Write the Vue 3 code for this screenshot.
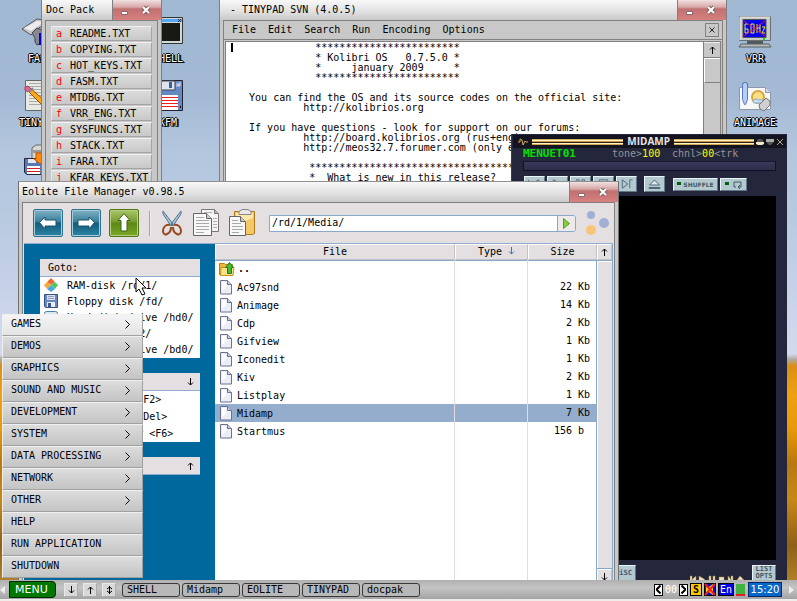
<script setup>
import { ref } from 'vue'

const path = ref('/rd/1/Media/')
const selected = ref('Midamp')

const docs = [
  ['a', 'README.TXT'], ['b', 'COPYING.TXT'], ['c', 'HOT_KEYS.TXT'], ['d', 'FASM.TXT'],
  ['e', 'MTDBG.TXT'], ['f', 'VRR_ENG.TXT'], ['g', 'SYSFUNCS.TXT'], ['h', 'STACK.TXT'],
  ['i', 'FARA.TXT'], ['j', 'KFAR_KEYS.TXT'],
]

const padMenu = ['File', 'Edit', 'Search', 'Run', 'Encoding', 'Options']
const stars = (n) => '*'.repeat(n)
const at = (col, text) => ' '.repeat(col) + text
const padText = [
  at(14, stars(24)),
  at(14, '* Kolibri OS   0.7.5.0 *'),
  at(14, '*     january 2009     *'),
  at(14, stars(24)),
  '',
  at(3, 'You can find the OS and its source codes on the official site:'),
  at(12, 'http://kolibrios.org'),
  '',
  at(3, 'If you have questions - look for support on our forums:'),
  at(12, 'http://board.kolibrios.org (rus+eng)'),
  at(12, 'http://meos32.7.forumer.com (only eng)'),
  '',
  at(13, stars(36)),
  at(13, '*  What is new in this release?'),
].join('\n')

const files = [
  ['Ac97snd', '22 Kb'], ['Animage', '14 Kb'], ['Cdp', '2 Kb'], ['Gifview', '1 Kb'],
  ['Iconedit', '1 Kb'], ['Kiv', '2 Kb'], ['Listplay', '1 Kb'], ['Midamp', '7 Kb'],
  ['Startmus', '156 b '],
]

const places = [
  ['ram', 'RAM-disk /rd/1/'], ['floppy', 'Floppy disk /fd/'], ['disk', 'Hard disk drive /hd0/'],
  ['disk', 'CD drive /cd2/'], ['disk', 'Hard disk drive /bd0/'],
]
const actions = ['Rename file <F2>', 'Delete file <Del>', 'Create folder <F6>']

const menu = [
  ['GAMES', true], ['DEMOS', true], ['GRAPHICS', true], ['SOUND AND MUSIC', true],
  ['DEVELOPMENT', true], ['SYSTEM', true], ['DATA PROCESSING', true], ['NETWORK', true],
  ['OTHER', true], ['HELP', false], ['RUN APPLICATION', false], ['SHUTDOWN', false],
]
const tasks = ['SHELL', 'Midamp', 'EOLITE', 'TINYPAD', 'docpak']
const transport = [
  'M4 4v9M15 4v9L7 8.500z', 'M6 4v9l9-4.500z', 'M6 4h3v9H6zM12 4h3v9h-3z', 'M6 4h9v9H6z', 'M6 4v9l6-4.500zM14 13V4h3',
]
</script>

<template>
  <div class="screen">
    <main class="desktop">
      <div class="icons first">
        <a href="#" class="shortcut">
          <svg width="32" height="32" viewBox="0 0 32 32">
            <path d="M-2 13 13 3l15 2 2 5-8 2-6-1-9 8z" fill="#c8c8cc" stroke="#555" />
            <path d="M0 12 13 5l7 1-13 9z" fill="#ececf0" />
            <path d="m13 12 5 2v13l-5 2-2-3v-4l-3-5z" fill="#888890" stroke="#444" />
            <path d="M15 17h15v12H15z" fill="#0000e0" />
          </svg>
          <span>FASM</span>
        </a>
        <a href="#" class="shortcut">
          <svg width="32" height="32" viewBox="0 0 32 32">
            <path d="M1.500.5h28v30h-28z" fill="#e8e8e4" stroke="#666" />
            <path d="M5 3.500h22M5 6.500h22M5 9.500h22M5 12.500h22M5 15.500h22M5 18.500h22M5 21.500h22M5 24.500h22" stroke="#aaa" />
            <path d="m2 9 3-2 23 20-1 4-4-1z" fill="#f8a818" stroke="#985000" />
            <path d="m1 7 3-1 3 3-3 3-3-2z" fill="#e86090" stroke="#a04060" />
            <path d="m5 12 4-4" stroke="#888" stroke-width="2" />
          </svg>
          <span>TINYPAD</span>
        </a>
        <a href="#" class="shortcut">
          <svg width="32" height="32" viewBox="0 0 32 32">
            <path d="m8 4 4-3h16v14H8z" fill="#d8d8d8" stroke="#666" />
            <path d="M9 6h18v3H9z" fill="#999" />
            <path d="M.5 14.500h20v16H3l-2.500-2z" fill="#5878b8" stroke="#222840" />
            <path d="M4 15h8v4H4z" fill="#e8e8e8" />
            <path d="M3 22h13v8H3z" fill="#fff" />
            <path d="M3 24.500h13M3 27.500h13" stroke="#d02020" />
            <path d="M12 9h6v6h3l-5 5-6-5h2z" fill="#ff8a10" stroke="#c05000" />
          </svg>
        </a>
      </div>
      <div class="icons second">
        <a href="#" class="shortcut">
          <svg width="32" height="32" viewBox="0 0 32 32">
            <path d="M.5 1.500h30v26H.5z" fill="#d0d8d8" stroke="#333" />
            <path d="M2 3h28v3H2z" fill="#58a8f0" />
            <path d="m26 3 3 3m0-3-3 3" stroke="#103050" />
            <path d="M3 7h25v18H3z" fill="#181814" />
          </svg>
          <span>SHELL</span>
        </a>
        <a href="#" class="shortcut">
          <svg width="32" height="32" viewBox="0 0 32 32">
            <path d="M.5.5h30v30H3l-2.500-2z" fill="#6488c0" stroke="#223" />
            <path d="M7 1h16v9H7z" fill="#e0e4ec" stroke="#445" />
            <path d="M17 2h3v6h-3z" fill="#3860a8" />
            <path d="M25 3v4m2-4v4m0-4h2m-4 2h4" stroke="#dde" />
            <path d="M3 15h23v15H3z" fill="#fff" />
            <path d="M3 17.500h23M3 20.500h23M3 23.500h23M3 26.500h23" stroke="#f02020" />
            <path d="M28 26h1v2h-1z" fill="#111" />
          </svg>
          <span>KFM</span>
        </a>
      </div>
      <div class="icons third">
        <a href="#" class="shortcut">
          <svg width="32" height="32" viewBox="0 0 32 32">
            <path d="M.5.5h31v24H.5z" fill="#c8ccc4" stroke="#687078" />
            <path d="M1 1h30M1 1v23" stroke="#f0f0e8" />
            <path d="M4 3.500h23v18H4z" fill="#0000f0" stroke="#556" />
            <path d="M9 8H6v9h3v-4H6M12 8h3v9h-3zM18 8v9m3-9v9m-3-5h3m2-1h3l-3 6h3" fill="none" stroke="#f0e830" />
            <path d="m5 5 21 15M26 5 5 20" stroke="#e81830" />
            <path d="M24 22h2v2h-2z" fill="#20d020" />
            <path d="M8 25h16v3H8z" fill="#505858" />
            <path d="M2 28h28l2 3H0z" fill="#b8bcb8" stroke="#586068" />
          </svg>
          <span>VRR</span>
        </a>
        <a href="#" class="shortcut">
          <svg width="32" height="32" viewBox="0 0 32 32">
            <path d="M.5 7.500h26l5 5v17H.5z" fill="#f8f8f8" stroke="#9098b0" />
            <path d="M26.500 7.500v5h5" fill="#d8dce8" stroke="#9098b0" />
            <circle cx="19" cy="17" r="6" fill="#f8e080" stroke="#d8a840" stroke-width="2" />
            <path d="M14 22c0-3 4-4 5-2 3-1 6 0 6 3h-10z" fill="#c8dcf8" stroke="#88a8d8" />
            <path d="M3.500 3.500h1v-1h3v1h1v16l-2 5h-1l-2-5z" fill="#b8ccf8" stroke="#5878c8" />
            <path d="m20 25 7-7 4 3v4l-6 6-4-2z" fill="#d0d0d0" stroke="#777" />
          </svg>
          <span>ANIMAGE</span>
        </a>
      </div>

      <section class="window docpack">
        <header class="titlebar">
          <h2>Doc Pack</h2>
          <div class="controls">
            <button aria-label="Minimize"><svg width="8" height="6" viewBox="0 0 8 6"><path d="M.5 1.500h6v3h-6z" fill="#fff" stroke="#8a6a6a" /></svg></button>
            <button aria-label="Close"><svg width="10" height="10" viewBox="0 0 10 10"><path d="m2 2 6 6m0-6L2 8" stroke="#806060" stroke-width="4" /><path d="m2 2 6 6m0-6L2 8" stroke="#fff" stroke-width="2" /></svg></button>
          </div>
        </header>
        <div class="body">
          <ul>
            <li v-for="[key, name] in docs" :key="key"><button><b>{{ key }}</b>{{ name }}</button></li>
          </ul>
        </div>
      </section>

      <section class="window tinypad">
        <header class="titlebar">
          <h2>- TINYPAD SVN (4.0.5)</h2>
          <div class="controls">
            <button aria-label="Minimize"><svg width="8" height="6" viewBox="0 0 8 6"><path d="M.5 1.500h6v3h-6z" fill="#fff" stroke="#8a6a6a" /></svg></button>
            <button aria-label="Close"><svg width="10" height="10" viewBox="0 0 10 10"><path d="m2 2 6 6m0-6L2 8" stroke="#806060" stroke-width="4" /><path d="m2 2 6 6m0-6L2 8" stroke="#fff" stroke-width="2" /></svg></button>
          </div>
        </header>
        <div class="body">
          <nav>
            <button v-for="m in padMenu" :key="m">{{ m }}</button>
            <button class="tab-close" aria-label="Close document"><svg width="6" height="6" viewBox="0 0 6 6"><path d="m.5.5 5 5m0-5-5 5" stroke="#222" /></svg></button>
          </nav>
          <div class="editor">
            <pre><i class="caret"></i>{{ padText }}</pre>
            <div class="scroll">
              <button aria-label="Scroll up"><svg width="7" height="8" viewBox="0 0 7 8"><path d="M3.500 8V1M1 3.500 3.500 1 6 3.500" fill="none" stroke="#000" /></svg></button>
              <div class="thumb"></div>
            </div>
          </div>
        </div>
      </section>

      <section class="midamp">
        <header>
          <svg width="11" height="9" viewBox="0 0 11 9"><path d="M1 5h2V2l2 1 1 5 2-4 1 1h2" fill="none" stroke="#d8a860" /></svg>
          <i class="rule wide"></i>
          <h2>MIDAMP</h2>
          <i class="rule"></i>
          <button aria-label="Minimize"><svg width="8" height="8" viewBox="0 0 8 8"><path d="M1 4V2l2-1h2l2 1v2z" fill="#555" /><path d="M0 4h8v2L6 7H2L0 6z" fill="#f0e8c8" /></svg></button>
          <button aria-label="Shade"><svg width="8" height="8" viewBox="0 0 8 8"><path d="M0 1h8v3H0z" fill="#aaa" /><path d="M1 4h6v1L5 7H3L1 5z" fill="#555" /></svg></button>
          <button aria-label="Close"><svg width="8" height="8" viewBox="0 0 8 8"><path d="m1 1 6 6m0-6L1 7" stroke="#b8a888" /></svg></button>
        </header>
        <div class="status">
          <b>MENUET01</b>
          <span>tone&gt;<em>100</em></span>
          <span>chnl&gt;<em>00</em>&lt;trk</span>
        </div>
        <div class="seek"></div>
        <div class="deck">
          <button v-for="(d, n) in transport" :key="n" class="key" :aria-label="'Transport ' + (n + 1)">
            <svg width="19" height="14" viewBox="1 1 19 15"><path :d="d" fill="none" stroke="#506878" /></svg>
          </button>
          <button class="key eject" aria-label="Eject"><svg width="19" height="14" viewBox="1 1 19 14"><path d="m10.500 4 5 5h-10zM5 11.500h11v1H5z" fill="#dce8ec" stroke="#506878" /></svg></button>
          <button class="key shuffle"><i class="led"></i>SHUFFLE</button>
          <button class="key repeat" aria-label="Repeat"><i class="led"></i><svg width="11" height="8" viewBox="0 0 11 8"><path d="M4 6H2V1h7v5H6m2-2L6 6l2 2" fill="none" stroke="#405868" /></svg></button>
        </div>
        <div class="playlist"></div>
        <footer>
          <button class="key misc">MiSC</button>
          <svg width="54" height="9" viewBox="0 0 54 9" fill="#f0e4c0" stroke="#a08040" stroke-width=".5">
            <path d="M0 1h2v7H0zM6 1v7L2 4.500zM9 1v7l6-3.500zM19 1h2v7h-2zM23 1h2v7h-2zM29 2h5v6h-5zM38 1v7l3-3.500zM41 1h2v7h-2zM47 5l3-4 4 4zM47 7h7v2h-7z" />
          </svg>
          <button class="key list">LIST OPTS</button>
        </footer>
      </section>

      <section class="window eolite">
        <header class="titlebar">
          <h2>Eolite File Manager v0.98.5</h2>
          <div class="controls">
            <button aria-label="Minimize"><svg width="8" height="6" viewBox="0 0 8 6"><path d="M.5 1.500h6v3h-6z" fill="#fff" stroke="#8a6a6a" /></svg></button>
            <button aria-label="Close"><svg width="10" height="10" viewBox="0 0 10 10"><path d="m2 2 6 6m0-6L2 8" stroke="#806060" stroke-width="4" /><path d="m2 2 6 6m0-6L2 8" stroke="#fff" stroke-width="2" /></svg></button>
          </div>
        </header>
        <div class="body">
          <div class="toolbar">
            <div class="nav">
              <button class="go-nav" aria-label="Back"><svg width="26" height="24" viewBox="0 0 26 24"><path d="M4.500 11.500 10 6v3h11v6H10v3z" fill="#fff" stroke="#1c5068" /></svg></button>
              <button class="go-nav" aria-label="Forward"><svg width="26" height="24" viewBox="0 0 26 24"><path d="M21.500 11.500 16 6v3H5v6h11v3z" fill="#fff" stroke="#1c5068" /></svg></button>
              <button class="go-nav up" aria-label="Up"><svg width="26" height="24" viewBox="0 0 26 24"><path d="m13 2.500 6 7h-3v10.500h-6V9.500H7z" fill="#fff" stroke="#3c6410" /></svg></button>
            </div>
            <i class="divider"></i>
            <button aria-label="Cut">
              <svg width="22" height="28" viewBox="0 0 22 28">
                <path d="M2 2v3l8 12 2-2zM20 2v3l-8 12-2-2z" fill="#a8c4d8" stroke="#4f7890" />
                <path d="M9 16c-4-1-7 2-7 6 0 3 2 4 4 3 3-1 4-4 4-7m3-2c4-1 7 2 7 6 0 3-2 4-4 3-3-1-4-4-4-7" fill="none" stroke="#94481c" stroke-width="2" />
              </svg>
            </button>
            <button aria-label="Copy">
              <svg width="26" height="28" viewBox="0 0 26 28">
                <path d="M8.500.5h13l4 4v18h-17z" fill="#f4f4f4" stroke="#777" />
                <path d="M21.500.5v4h4" fill="#bbb" stroke="#777" />
                <path d="M20 9.500h4M20 12.500h4M20 15.500h4M20 18.500h4M11 3.500h8" stroke="#b0b0b0" />
                <path d="M.5 4.500h13l5 5v17H.5z" fill="#f8f8f8" stroke="#666" />
                <path d="M13.500 4.500v5h5" fill="#ccc" stroke="#666" />
                <path d="M3 8.500h8M3 11.500h13M3 14.500h13M3 17.500h13M3 20.500h13M3 23.500h8" stroke="#a8a8a8" />
              </svg>
            </button>
            <button aria-label="Paste">
              <svg width="26" height="28" viewBox="0 0 26 28">
                <path d="M5.500 2.500h20v22l-2 1h-18z" fill="#f4c868" stroke="#b07818" />
                <path d="M7 4h17v5L7 16z" fill="#fce8a8" />
                <path d="M10 2.500 13 .5h6l3 2v3H10z" fill="#e8e8e8" stroke="#888" />
                <path d="M.5 7.500h11l5 5v14H.5z" fill="#f8f8f8" stroke="#666" />
                <path d="M11.500 7.500v5h5" fill="#ccc" stroke="#666" />
                <path d="M3 11.500h6M3 14.500h9M3 17.500h11M3 20.500h11M3 23.500h7" stroke="#a8a8a8" />
              </svg>
            </button>
            <form @submit.prevent>
              <input v-model="path" type="text" aria-label="Path" />
              <button aria-label="Go"><svg width="7" height="11" viewBox="0 0 7 11"><path d="M.5.5v10l6-5z" fill="#84cc40" stroke="#58a018" /></svg></button>
            </form>
            <svg width="23" height="26" viewBox="0 0 23 26">
              <circle cx="5" cy="5" r="4" fill="#a0b0d4" /><circle cx="18" cy="13" r="5" fill="#a0b0d4" /><circle cx="5" cy="20" r="5" fill="#fcc478" />
            </svg>
          </div>
          <div class="content">
            <aside>
              <section>
                <h3>Goto:</h3>
                <ul class="places">
                  <li v-for="[icon, label] in places" :key="label">
                    <svg v-if="icon === 'ram'" width="14" height="14" viewBox="0 0 14 14">
                      <path d="m7 0 4 4-4 3-4-3z" fill="#f06838" /><path d="m3 4 4 3-4 4-3-4z" fill="#f8a838" />
                      <path d="m11 4 3 3-3 4-4-4z" fill="#50c860" /><path d="m7 7 4 4-4 3-4-3z" fill="#48a8e0" />
                    </svg>
                    <svg v-else-if="icon === 'floppy'" width="14" height="14" viewBox="0 0 14 14">
                      <path d="M.5.5h13v13h-12l-1-1z" fill="#6888c0" stroke="#385088" />
                      <path d="M3 1h8v5H3z" fill="#d8e0f0" /><path d="M4 2.500h6M4 4.500h6" stroke="#90a0c0" />
                      <path d="M3 8h8v5H3z" fill="#e8ecf4" /><path d="M4 9h3v4H4z" fill="#405890" />
                    </svg>
                    <svg v-else width="14" height="14" viewBox="0 0 14 14"><rect x=".5" y="1.500" width="13" height="11" rx="2" fill="#dce8f0" stroke="#4880a8" /></svg>
                    <span>{{ label }}</span>
                  </li>
                </ul>
              </section>
              <section>
                <h3><svg width="7" height="8" viewBox="0 0 7 8"><path d="M3.500 0v7M1 4.500 3.500 7 6 4.500" fill="none" stroke="#000" /></svg></h3>
                <ul class="actions"><li v-for="a in actions" :key="a">{{ a }}</li></ul>
              </section>
              <section>
                <h3><svg width="7" height="8" viewBox="0 0 7 8"><path d="M3.500 8V1M1 3.500 3.500 1 6 3.500" fill="none" stroke="#000" /></svg></h3>
              </section>
            </aside>
            <div class="listing">
              <table>
                <thead>
                  <tr>
                    <th class="file">File</th>
                    <th class="type">Type <svg width="7" height="8" viewBox="0 0 7 8"><path d="M3.500 0v7M1 4.500 3.500 7 6 4.500" fill="none" stroke="#3870c0" /></svg></th>
                    <th class="size">Size</th>
                  </tr>
                </thead>
                <tbody>
                  <tr>
                    <td>
                      <svg class="folder" width="16" height="14" viewBox="0 0 16 14">
                        <path d="M.5 1.500h5l1 1h7v10H.5z" fill="#f0b838" stroke="#b88010" />
                        <path d="M2 5.500h13l-1 8H1.500z" fill="#fce088" stroke="#c89018" />
                        <path d="m10.500.5 4 5h-2v6h-4v-6h-2z" fill="#48b838" stroke="#208020" />
                      </svg><b>..</b>
                    </td>
                    <td></td>
                    <td></td>
                  </tr>
                  <tr v-for="[name, size] in files" :key="name" :class="{ on: name === selected }" @click="selected = name">
                    <td>
                      <svg class="page" width="13" height="15" viewBox="0 0 13 15">
                        <path d="M.5.5h7l4 4v9.500H.5z" fill="#eceef6" stroke="#6c7094" />
                        <path d="M2 2h4v5L2 11z" fill="#fff" /><path d="M7.500.5v4h4" fill="#c8cce0" stroke="#6c7094" />
                      </svg>{{ name }}
                    </td>
                    <td></td>
                    <td class="num">{{ size }}</td>
                  </tr>
                  <tr class="rest"><td></td><td></td><td></td></tr>
                </tbody>
              </table>
              <div class="scroll">
                <button aria-label="Scroll up"><svg width="7" height="8" viewBox="0 0 7 8"><path d="M3.500 8V1M1 3.500 3.500 1 6 3.500" fill="none" stroke="#000" /></svg></button>
                <div class="thumb"></div>
                <button aria-label="Scroll down"><svg width="7" height="8" viewBox="0 0 7 8"><path d="M3.500 0v7M1 4.500 3.500 7 6 4.500" fill="none" stroke="#000" /></svg></button>
              </div>
            </div>
          </div>
        </div>
      </section>

      <nav class="start-menu">
        <button v-for="[label, sub] in menu" :key="label">
          {{ label }}
          <svg v-if="sub" width="5" height="9" viewBox="0 0 5 9"><path d="m.5.5 4 4-4 4" fill="none" stroke="#000" /></svg>
        </button>
      </nav>

      <svg class="pointer" width="13" height="20" viewBox="0 0 13 20">
        <path d="M1 1v14l3-3 3 6 3-1-3-6h4z" fill="#fff" stroke="#000" />
      </svg>
    </main>

    <footer class="taskbar">
      <svg class="edge" width="5" height="8" viewBox="0 0 5 8"><path d="M5 0v8L0 4z" fill="#eee" /></svg>
      <button class="start">MENU</button>
      <div class="arrows">
        <button aria-label="Down"><svg width="7" height="8" viewBox="0 0 7 8"><path d="M3.500 0v7M1 4.500 3.500 7 6 4.500" fill="none" stroke="#000" /></svg></button>
        <button aria-label="Up"><svg width="7" height="8" viewBox="0 0 7 8"><path d="M3.500 8V1M1 3.500 3.500 1 6 3.500" fill="none" stroke="#000" /></svg></button>
        <button aria-label="Toggle"><svg width="7" height="8" viewBox="0 0 7 8"><path d="M3.500 0v8M1 3l2.500-2L6 3M1 5l2.500 2L6 5" fill="none" stroke="#000" /></svg></button>
      </div>
      <div class="tasks"><button v-for="t in tasks" :key="t">{{ t }}</button></div>
      <div class="tray">
        <button class="step" aria-label="Previous desktop"><svg width="5" height="9" viewBox="0 0 5 9"><path d="m4.500.5-4 4 4 4" fill="none" stroke="#000" stroke-width="2" /></svg></button>
        <span class="count">00</span>
        <button class="step" aria-label="Next desktop"><svg width="5" height="9" viewBox="0 0 5 9"><path d="m.5.5 4 4-4 4" fill="none" stroke="#000" stroke-width="2" /></svg></button>
        <b class="tag yellow">S</b>
        <svg class="mute" width="12" height="13" viewBox="0 0 12 13"><path d="M0 0h12v13H0z" /><path d="M1 1h10v11H1z" fill="#1010c0" /><path d="M2 4h3l4-3v11L5 9H2z" fill="#f8d020" /><path d="m1 1 10 11M11 1 1 12" stroke="#f02020" stroke-width="2" /></svg>
        <span class="tag blue">En</span>
        <i class="load"></i>
        <time>15:20</time>
        <svg class="edge" width="5" height="8" viewBox="0 0 5 8"><path d="M0 0v8l5-4z" fill="#eee" /></svg>
      </div>
    </footer>
  </div>
</template>

<style>
body { margin: 0; }
</style>

<style scoped>
* { box-sizing: border-box; }
.screen {
  display: flex; flex-direction: column; height: 100vh; overflow: hidden;
  font: 10px/12px "DejaVu Sans Mono", "Liberation Mono", monospace; color: #000;
}
button, input { margin: 0; padding: 0; border: 0; background: none; font: inherit; color: inherit; }
svg { display: block; flex: none; }
h2, h3, ul, pre { margin: 0; padding: 0; font: inherit; list-style: none; }

.desktop {
  position: relative; flex: 1; min-height: 0; overflow: hidden;
  background: linear-gradient(#a0b8d2 0%, #a4bad4 17%, #b4c6de 26%, #b8cae0 38%, #c4d0e8 48%, #d4daee 61%, #b0a8a0 62%, #d89018 63%, #f0a010 68%, #e89808 74%, #b87810 80%, #c88818 86%, #906018 94%, #b08028 100%);
}

.icons { position: absolute; top: 16px; display: flex; flex-direction: column; align-items: center; width: 60px; }
.first { left: 10px; }
.second { left: 138px; }
.third { right: 12px; }
.shortcut { display: flex; flex-direction: column; align-items: center; gap: 5px; height: 64px; color: #fff; text-decoration: none; text-shadow: 1px 0 #000, -1px 0 #000, 0 1px #000, 0 -1px #000, 1px 1px #000, 2px 1px #000; }
.shortcut svg { overflow: visible; }

.window { position: absolute; display: flex; flex-direction: column; padding: 0 3px 3px; border: 1px solid #808080; background: #c8c8c8; }
.titlebar {
  display: flex; align-items: center; justify-content: space-between; flex: none; height: 20px; margin: 0 -3px; padding-left: 3px;
  background: linear-gradient(#f8f8f8, #e0e0e0 60%, #c8c8c8);
}
.controls { display: flex; align-items: center; align-self: stretch; width: 49px; padding-left: 6px; gap: 9px; border-left: 1px solid #808080; background: linear-gradient(#f0e0e0, #d8a8a8 35%, #c07070 45%, #d88080); }
.controls button { display: grid; place-items: center; width: 12px; height: 12px; }
.controls button:first-child { align-items: end; }
.body { display: flex; flex-direction: column; flex: 1; min-height: 0; border: 1px solid #808080; }

.docpack { top: -1px; left: 41px; width: 121px; height: 220px; }
.docpack h2 { padding-left: 1px; }
.docpack ul { display: grid; gap: 1px; padding: 5px; }
.docpack .body { overflow: hidden; }
.docpack li button { display: flex; align-items: center; gap: 8px; width: 100%; height: 15px; padding-left: 4px; border: 1px solid #a4a4a4; border-top-color: #f0f0f0; border-left-color: #e8e8e8; background: linear-gradient(#dcdcdc, #c8c8c8); }
.docpack b { font-weight: 400; color: #f00; }

.tinypad { top: -1px; left: 219px; right: 70px; height: 240px; }
.tinypad h2 { padding-left: 7px; }
.tinypad nav { display: flex; align-items: center; flex: none; gap: 12px; height: 19px; padding: 0 3px 0 8px; border-bottom: 1px solid #808080; }
.tab-close { display: grid; place-items: center; width: 14px; height: 14px; margin-left: auto; border: 1px solid #808080; }
.editor { display: flex; flex: 1; min-height: 0; margin: 1px 1px 0; border: 1px solid #808080; background: #fff; }
.editor pre { flex: 1; min-width: 0; padding: 1px 0 0 5px; overflow: hidden; line-height: 10px; }
.caret { position: absolute; width: 2px; height: 9px; background: #000; }
.tinypad .scroll { width: 17px; border-left: 1px solid #808080; background: #c8c8c8; }
.tinypad .scroll button { display: grid; place-items: center; width: 100%; height: 16px; border-bottom: 1px solid #808080; border-top: 1px solid #eee; }
.tinypad .thumb { height: 25px; border: 1px solid #808080; border-top-color: #fff; border-left-color: #fff; border-right: 0; }

.midamp { position: absolute; top: 134px; left: 511px; right: 10px; bottom: 0; display: flex; flex-direction: column; padding: 0 11px 0 12px; overflow: hidden; background: #24263c; border: solid #383a50; border-width: 0 0 0 1px; }
.midamp header { display: flex; align-items: center; gap: 4px; flex: none; height: 13px; margin: 1px -10px 0 -11px; padding: 0 2px 0 4px; background: #141420; }
.midamp header button { display: grid; place-items: center; width: 8px; margin-left: -2px; }
.midamp h2 { font: 700 10px/13px "Open Sans", sans-serif; color: #e4e4e8; }
.rule { flex: 7; height: 6px; background: linear-gradient(#d0b060 0 1px, #fff4c8 1px 2px, #c89840 2px 3px, #302010 3px 4px, #fff4c8 4px 5px, #d0a850 5px); }
.wide { flex: 8; }
.status { display: grid; grid-template-columns: 88px 60px 1fr; flex: none; height: 12px; color: #949494; }
.status b { margin-left: -1px; font-size: 11px; color: #00e000; }
.status em { font-style: normal; color: #ff0; }
.seek { flex: none; height: 10px; margin: 1px 0 5px -1px; border: 1px solid #101028; border-top-color: #181a30; background: linear-gradient(#3c3a5c, #2c2c48); }
.deck { display: flex; flex: none; gap: 2px; height: 16px; }
.key { display: flex; align-items: center; justify-content: center; flex: none; border: 1px solid #e8f4f8; border-right-color: #607888; border-bottom-color: #607888; background: #b4c8d0; font: 700 7px/7px "DejaVu Sans Mono", monospace; color: #405868; }
.deck .key { width: 21px; }
.deck .eject { margin-left: 5px; }
.deck .shuffle { gap: 2px; width: 45px; height: 13px; margin: 2px 0 0 6px; font-family: "DejaVu Sans", sans-serif; font-size: 6px; }
.deck .repeat { gap: 3px; width: 27px; height: 13px; margin-top: 2px; }
.led { width: 4px; height: 3px; margin-bottom: 3px; background: #006010; }
.playlist { flex: 1; margin: 4px 0 5px; background: #000; }
.midamp footer { display: flex; align-items: flex-end; justify-content: flex-end; flex: none; height: 15px; }
.midamp footer svg { align-self: flex-end; margin: 0 8px -4px 54px; }
.misc { align-self: flex-start; width: 25px; height: 16px; }
.list { align-self: flex-start; align-items: flex-start; width: 24px; height: 20px; }

.eolite { top: 181px; left: 18px; right: 178px; bottom: -10px; border-color: #909090 #707070; }
.eolite .body { padding: 0 1px; background: #e4dfe1; }
.toolbar { display: flex; align-items: center; flex: none; gap: 10px; height: 40px; padding: 0 4px 0 9px; }
.nav { display: flex; gap: 8px; }
.go-nav { display: grid; place-items: center; width: 30px; height: 28px; border: 1px solid #2c708c; border-radius: 2px; box-shadow: inset 0 0 0 1px #a8ccdc; background: linear-gradient(#80b0c4, #38809c 45%, #145c7c 50%, #2c84a4); }
.go-nav.up { border-color: #507810; box-shadow: inset 0 0 0 1px #b4cc80; background: linear-gradient(#a8c468, #789c34 45%, #5c8814 50%, #78a828); }
.divider { width: 2px; height: 25px; border-left: 1px solid #88a8c8; background: #f0f0f4; }
.toolbar form { display: flex; flex: 1; min-width: 0; height: 17px; margin-left: 4px; border: 1px solid #88a8cc; border-radius: 0 3px 3px 0; background: #fff; }
.toolbar input { flex: 1; min-width: 0; padding: 0 2px; background: #fff; outline: 0; }
.toolbar form button { display: grid; place-items: center; width: 18px; border-left: 1px solid #88a8cc; border-radius: 0 3px 3px 0; background: #eeeaec; }

.content { display: flex; flex: 1; min-height: 0; border-top: 1px solid #90acd0; }
aside { display: flex; flex-direction: column; flex: none; gap: 15px; width: 191px; padding: 15px 15px 0 16px; background: #00689c; }
aside section { flex: none; background: #fff; }
aside h3 { display: flex; align-items: center; height: 18px; padding: 0 6px 0 8px; border-bottom: 1px solid #90acd0; background: #e4dfe1; }
aside h3 svg { margin-left: auto; }
.places { padding-top: 1px; }
.places li { display: flex; gap: 9px; height: 16px; padding-left: 4px; white-space: nowrap; overflow: hidden; }
.places span { padding-top: 2px; }
.actions li { height: 17px; padding-left: 25px; line-height: 17px; }

.listing { display: flex; flex: 1; min-width: 0; background: #fff; }
table { flex: 1; width: 100%; height: 100%; table-layout: fixed; border-collapse: separate; border-spacing: 0; }
th { height: 16px; padding: 0; border: 1px solid #c4c0c8; border-top-color: #fff; border-left-color: #fff; background: #e4dfe1; font-weight: 400; box-shadow: 1px 0 #88a8cc, 0 1px #88a8cc; line-height: 12px; }
th svg { display: inline-block; }
.type { width: 73px; padding-left: 10px; }
.size { width: 69px; }
td { height: 18px; padding: 0 6px 0 5px; border-right: 1px solid #e0dcdf; white-space: pre; vertical-align: middle; line-height: 12px; }
td:first-child { white-space: nowrap; }
td:last-child { border-right-color: #88a8cc; }
td svg { display: inline-block; margin-right: 4px; vertical-align: middle; }
td .folder { margin: 0 3px 0 -1px; }
.num { text-align: right; }
.on td { background: #94adcc; }
.rest td { height: auto; }
.listing .scroll { display: flex; flex-direction: column; flex: none; width: 16px; border-right: 1px solid #88a8cc; background: #e4dfe1; }
.listing .scroll button { display: grid; place-items: center; height: 16px; border: 1px solid #fff; border-right-color: #c4c0c8; border-bottom-color: #c4c0c8; }
.listing .thumb { flex: 1; border: solid #88a8cc; border-width: 1px 0; box-shadow: inset 1px 1px #fff; }

.start-menu { position: absolute; left: 2px; bottom: 2px; display: flex; flex-direction: column; width: 141px; }
.start-menu button { display: flex; align-items: center; justify-content: space-between; height: 22px; padding: 0 12px 2px 8px; border: 1px solid #a0a0a0; border-top-color: #f0f0f0; border-left-color: #f0f0f0; background: linear-gradient(#dcdcdc, #c4c4c4); }
.start-menu button:first-child { background: linear-gradient(#f4f4f4, #e4e4e4); }

.pointer { position: absolute; left: 135px; top: 277px; }

.taskbar { display: flex; align-items: center; flex: none; height: 21px; border-bottom: 2px solid #f0ecea; background: linear-gradient(#b0b0b0, #c4c4c4 40%, #b4b4b4 70%, #a4a4a4); }
.start { width: 47px; height: 17px; margin: 0 8px 0 4px; padding-left: 5px; border: 1px solid #002800; border-radius: 0 4px 4px 0; background: #007800; color: #fff; font: 11px/15px "DejaVu Sans", sans-serif; text-align: left; }
.arrows { display: flex; gap: 5px; margin-right: 6px; }
.arrows button { display: grid; place-items: center; width: 14px; height: 14px; border: 1px solid #e8e8e8; border-right-color: #aaa; border-bottom-color: #aaa; background: #d8d8d8; }
.tasks { display: flex; gap: 2px; }
.tasks button { width: 58px; height: 14px; padding-left: 4px; border: 1px solid #383838; border-radius: 3px; background: #b8b8b8; line-height: 12px; text-align: left; }
.tray { display: flex; align-items: center; gap: 2px; margin-left: auto; padding-right: 3px; }
.step { display: grid; place-items: center; width: 9px; height: 12px; border: 1px solid #000; background: #fff; }
.count { color: #fff; }
.tag { height: 13px; padding: 0 2px; border: 1px solid #000; line-height: 11px; text-align: center; }
.yellow { width: 12px; background: #ffc800; }
.blue { width: 16px; padding: 0; background: #0000e8; color: #fff; }
.load { width: 9px; height: 12px; border-bottom: 2px solid #e02020; background: #40b040; }
.tray time { width: 34px; height: 15px; margin: 0 5px 0 1px; border: 1px solid #002868; background: #0868c8; color: #fff; font: 10px/13px "DejaVu Sans", sans-serif; text-align: center; }
</style>
